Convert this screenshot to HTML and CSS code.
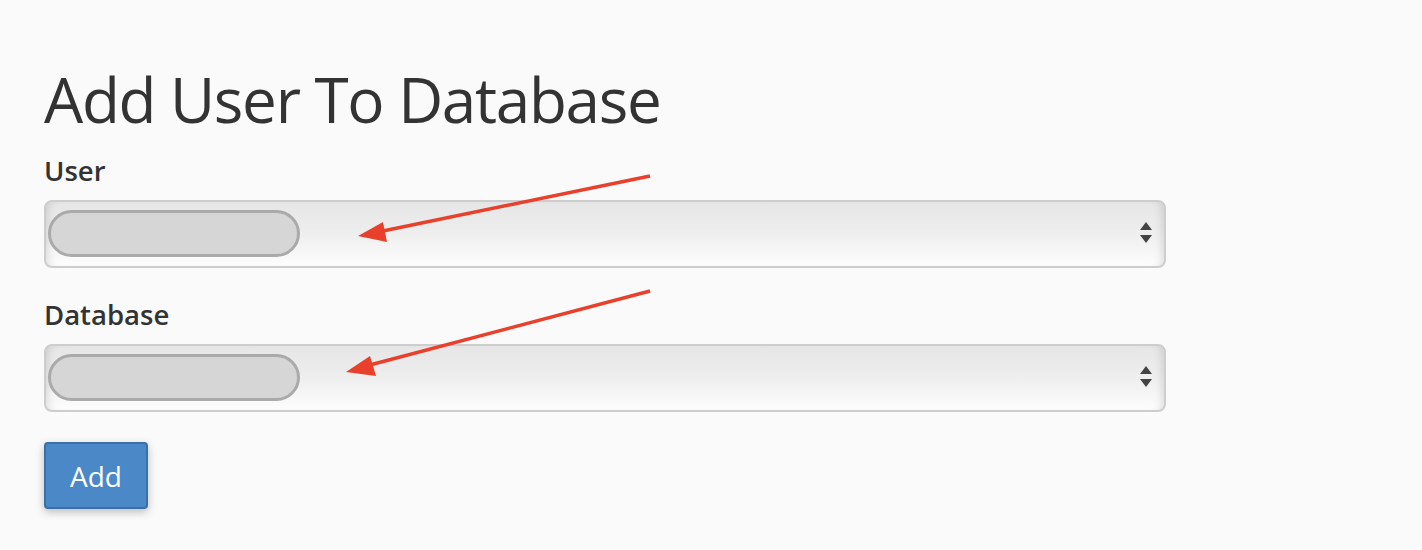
FILE: index.html
```html
<!DOCTYPE html>
<html lang="en">
<head>
    <meta charset="UTF-8">
    <meta name="viewport" content="width=device-width, initial-scale=1.0">
    <title>Add User To Database</title>
    <link rel="stylesheet" href="styles.css">
</head>
<body>
    <div class="page">
        <h1 class="title">Add User To Database</h1>

        <form class="add-form">
            <div class="field">
                <label class="field-label">User</label>
                <div class="select-box">
                    <span class="redacted"></span>
                    <svg class="caret" viewBox="0 0 12 24"><path d="M6 1 L12 9 H0 Z M0 14 H12 L6 22 Z" fill="#444"/></svg>
                </div>
            </div>

            <div class="field">
                <label class="field-label">Database</label>
                <div class="select-box">
                    <span class="redacted"></span>
                    <svg class="caret" viewBox="0 0 12 24"><path d="M6 1 L12 9 H0 Z M0 14 H12 L6 22 Z" fill="#444"/></svg>
                </div>
            </div>

            <button type="button" class="add-button">Add</button>
        </form>

        <!-- annotation arrows -->
        <svg class="annotations" width="1422" height="550" viewBox="0 0 1422 550">
            <g stroke="#e8402a" stroke-width="3.5" fill="#e8402a">
                <line x1="650" y1="176" x2="378" y2="232"/>
                <polygon points="358,236 383,222 387,242" stroke="none"/>
                <line x1="650" y1="291" x2="366" y2="366"/>
                <polygon points="346,372 370,356 376,376" stroke="none"/>
            </g>
        </svg>
    </div>
</body>
</html>
```

FILE: styles.css
```css
* {
    margin: 0;
    padding: 0;
    box-sizing: border-box;
}

body {
    background-color: #fafafa;
    color: #333;
    font-family: "Open Sans", "Noto Sans", sans-serif;
    overflow: hidden;
}

.page {
    position: relative;
    width: 1422px;
    height: 550px;
    padding: 60px 0 0 44px;
}

.title {
    font-size: 62px;
    font-weight: 400;
    letter-spacing: -1.3px;
    line-height: 78px;
    color: #333;
}

.add-form {
    width: 1122px;
}

.field {
    margin-bottom: 30px;
}

.field-label {
    display: block;
    font-size: 27.5px;
    font-weight: 600;
    line-height: 34px;
    margin: 16px 0 12px 0;
}

.field + .field .field-label {
    margin-top: 0;
}

.select-box {
    display: flex;
    align-items: center;
    justify-content: space-between;
    height: 68px;
    padding: 0 12px 2px 2px;
    border: 2px solid #cdcdcd;
    border-radius: 8px;
    background: linear-gradient(to bottom, #e6e6e6 0%, #ececec 40%, #fdfdfd 100%);
    box-shadow: inset 8px 0 8px -6px rgba(0, 0, 0, 0.12), inset -8px 0 8px -6px rgba(0, 0, 0, 0.12);
}

.redacted {
    display: block;
    width: 252px;
    height: 47px;
    background-color: #d6d6d6;
    border: 3px solid #aaaaaa;
    border-radius: 24px;
}

.caret {
    width: 12px;
    height: 24px;
}

.add-button {
    display: block;
    width: 104px;
    height: 67px;
    font-family: "Open Sans", "Noto Sans", sans-serif;
    font-size: 28px;
    color: #fff;
    background-color: #4a88c8;
    border: 2px solid #3b6fa6;
    border-radius: 4px;
    box-shadow: 0 3px 8px rgba(0, 0, 0, 0.25);
    cursor: pointer;
}

.annotations {
    position: absolute;
    top: 0;
    left: 0;
    pointer-events: none;
}
```
